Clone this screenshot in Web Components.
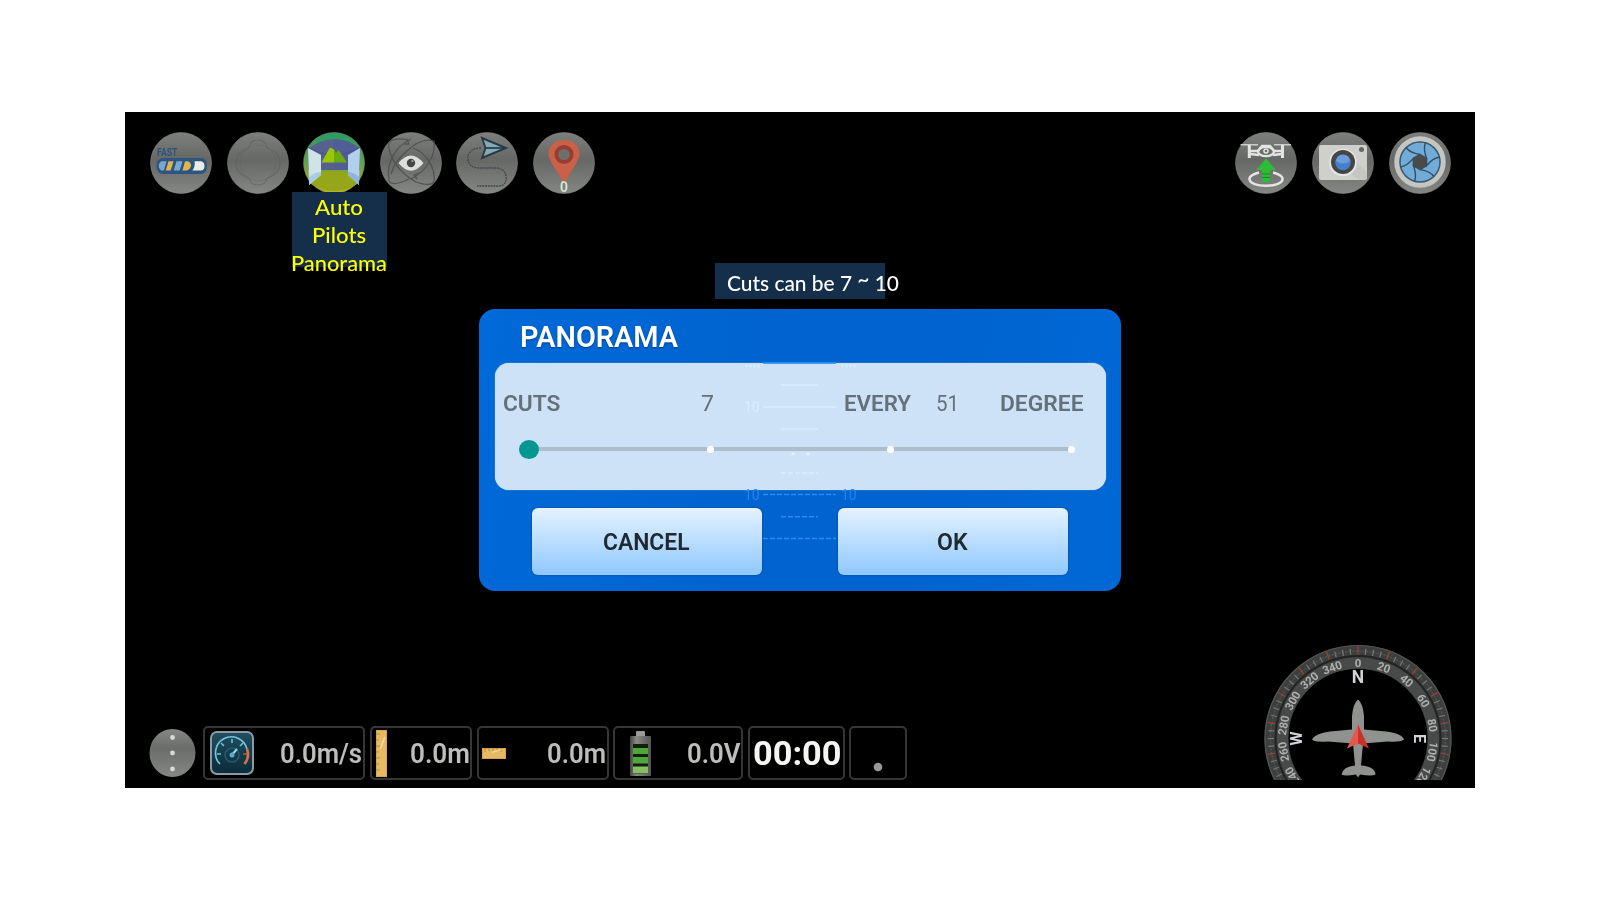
<!DOCTYPE html>
<html lang="en">
<head>
<meta charset="utf-8">
<title>Panorama</title>
<style>
body{margin:0;padding:112px 125px 0;background:#fff;font-family:Roboto,"Liberation Sans",sans-serif}
</style>
</head>
<body>
<flight-screen></flight-screen>
<script>
const define = (name, html, setup) => {
  const t = document.createElement('template');
  t.innerHTML = html;
  customElements.define(name, class extends HTMLElement {
    constructor() {
      super();
      this.attachShadow({mode: 'open'}).append(t.content.cloneNode(true));
    }
    connectedCallback() { if (setup) setup(this, this.shadowRoot); }
  });
};

/* One line of text, stretched or squeezed to an exact width */
define('fit-text', `<style>
:host{display:block;white-space:nowrap;line-height:1;flex:none}
span{display:inline-block;transform-origin:0 50%}
::slotted(sup){font-size:inherit;line-height:0;vertical-align:4px}
</style><span><slot></slot></span>`, (el, r) => {
  const w = +el.getAttribute('w'), s = r.querySelector('span');
  el.style.width = w + 'px';
  el.style.fontSize = el.getAttribute('size') + 'px';
  s.style.transform = 'scaleX(' + w / s.getBoundingClientRect().width + ')';
});

const blades = [0,1,2,3,4,5].map(i => `<path transform="rotate(${i*60} 31 30)" d="M31 22.500L37.500 26Q34 17 36.500 10.500" fill="none" stroke="#344f63" stroke-width="1.400"/>`).join('');
const icons = {
  fast: `<text x="7" y="23.500" font-size="11.500" font-weight="700" fill="#2c527c" textLength="20.500" lengthAdjust="spacingAndGlyphs">FAST</text>
   <rect x="6.500" y="26" width="50.500" height="16" rx="6.500" fill="#2c5580"/>
   <path d="M11 29.200h5.500l-2.600 9.300h-3q-4.500-4.600.1-9.300z" fill="#78a9ca"/><path d="M18.500 29.200h5l-2.800 9.300h-5z" fill="#e2b34e"/><path d="M26.500 29.200h6l-2.800 9.300h-6z" fill="#78a9ca"/><path d="M35 29.200h3q3.500 2 3 4.700t-4 4.600h-4.500z" fill="#e2b34e"/><path d="M44.500 29.200h7q3 1 3 4.700t-3 4.700h-9q3-4.500 2-9.400z" fill="#ecebe6"/>`,
  blank: `<g fill="none" stroke="#5d5f5d" stroke-width="1.100" opacity=".6"><path d="M22 16Q23 8 31 8T40 16M22 46Q23 53 31 53T40 46M22 16Q9 20 9 31T22 46M40 16Q53 20 53 31T40 46"/><circle cx="31" cy="31" r="18" opacity=".5"/></g>`,
  panorama: `<path d="M5 17Q31-3 57 17V38H5z" fill="#56618f"/><path d="M31 7Q47 7 57 17V38H31z" fill="#4e5b98" opacity=".7"/>
   <path d="M5 15Q31 31 57 15" fill="none" stroke="#475083" stroke-width=".8"/>
   <path d="M18.500 30.500L27 15.500 31 17.500V30.500z" fill="#99c800"/><path d="M31 17.500L33 21 35.500 18 44 30.500H31z" fill="#6cab10"/>
   <path d="M8 45Q31 32 54 45V52Q31 66 8 52z" fill="#96a61a"/>
   <path d="M5 16L18 23V43L6 53z" fill="#cfe3e8"/><path d="M57 16L45 23V43L56 53z" fill="#b3cfee"/><path d="M6 45Q12 40 18 40V43L6 53z" fill="#a9cbe4"/><path d="M56 45Q50 40 45 40V43L56 53z" fill="#8fb4dd"/>`,
  eye: `<g fill="none" stroke="#4b4d4b" stroke-width="1.300" opacity=".8"><path d="M31 7C15 15 6 30 9 49Q12 55 29 47"/><path d="M28 8Q16 5 9 10C7 23 18 40 36 50Q50 55 54 50C56 35 45 20 33 16"/><path d="M31 47C48 38 56 22 54 9Q42 5 28 18Q14 30 11 42"/><path d="M24 12L29 12 27 7M39 41L34 43 37 47"/></g>
   <path d="M18.500 31Q31 16 43.500 31Q31 46.500 18.500 31z" fill="#dededc"/><circle cx="31" cy="31" r="4.200" fill="#454845"/><circle cx="32.500" cy="29" r="1.100" fill="#aaa"/>`,
  route: `<path d="M25 16C8 15 8 36 22 36H41C53 37 53 54 43 54H21" fill="none" stroke="#42474f" stroke-width="1.300" stroke-dasharray="2 .8"/><path d="M26 6L50 16 26 26 29.500 16z" fill="#83abb1" stroke="#26394a" stroke-width="1.900"/><path d="M30 16H49" stroke="#26394a" stroke-width="1.700"/>`,
  pin: `<path d="M31 51.500L18 30Q12 19 20 12Q23 8 31 8T42 12Q50 19 44 30z" fill="#cb6049"/><circle cx="31" cy="22.500" r="7.600" fill="#6e706d" stroke="#963f31" stroke-width="4"/><text x="31" y="59.500" text-anchor="middle" font-size="14.500" font-weight="900" fill="#d8e8d0" stroke="#444" stroke-width=".2">0</text>`,
  drone: `<g fill="none" stroke="#e4e4e2"><path d="M5.500 12.700H23M39 12.700H56" stroke-width="1.400" opacity=".8"/><path d="M14.300 13V26M47.500 13V26" stroke-width="3"/><path d="M15 19H23L27 14H35L39 19H47M15 22L24 23M47 22L38 23" stroke-width="2.300"/><ellipse cx="31" cy="19.500" rx="8" ry="4.700" stroke-width="2.300"/><circle cx="31" cy="19" r="2" stroke-width="1.500"/><path d="M24 40.500Q14.500 43 14.500 47C14.500 56 47.500 56 47.500 47Q47.500 43 38 40.500" stroke-width="2.500"/></g><path d="M31 26.500L41 38H35V50H27V38H21z" fill="#2bbd35"/><path d="M27 42H35M27 45.500H35" stroke="#188c25"/>`,
  camera: `<path d="M9 13H53Q55 13 55 15V46Q55 48 53 48H9Q7 48 7 46V15Q7 13 9 13z" fill="#cfd0cc"/><path d="M37 41L48 48H53Q55 48 55 46V40L44 30z" fill="#bfc0bc" opacity=".6"/><circle cx="31" cy="30.500" r="13.800" fill="#e5e5e2"/><circle cx="31" cy="30" r="12" fill="#454746"/><circle cx="31" cy="30.500" r="7.800" fill="#4580cd"/><path d="M24 29Q25 22.500 31 22.500T38 29Q31 34 24 29z" fill="#6c9cdb"/><circle cx="49.500" cy="17.500" r="2.500" fill="#666"/>`,
  shutter: `<circle cx="31" cy="30" r="23" fill="none" stroke="#c5c6c2" stroke-width="5.500"/><circle cx="31" cy="30" r="20" fill="#71acd9" stroke="#3c5a70" stroke-width="1.500"/>${blades}<path d="M31 22.500L37.500 26V34L31 37.500 24.500 34V26z" fill="#494b48"/>`
};

/* Round toolbar button */
define('tool-button', `<style>
:host{display:block;position:relative;width:62px;height:62px;flex:none}
svg{display:block;filter:blur(.6px)}
</style><svg width="62" height="62" viewBox="0 0 62 62" font-family="Roboto"><defs>
<linearGradient id="g" x2="0" y2="1"><stop offset="0" stop-color="#7d7f7d"/><stop offset=".45" stop-color="#666866"/><stop offset="1" stop-color="#858785"/></linearGradient>
<linearGradient id="p" x2="0" y2="1"><stop offset="0" stop-color="#279a62"/><stop offset=".55" stop-color="#69a449"/><stop offset="1" stop-color="#b5b51b"/></linearGradient></defs>
<circle cx="31" cy="31" r="30.500" fill="url(#g)" stroke="#858785" stroke-opacity=".55"/><g></g></svg><slot></slot>`, (el, r) => {
  const k = el.getAttribute('icon');
  if (k === 'panorama') r.querySelector('circle').setAttribute('fill', 'url(#p)');
  r.querySelector('g').innerHTML = icons[k];
});

/* Caption hanging below the active tool */
define('tool-caption', `<style>
:host{position:absolute;left:-11.300px;top:60.500px;width:94.500px;height:75px;background:#152f4b;color:#ff0;font-family:Lato,sans-serif;font-weight:500;display:flex;flex-direction:column;align-items:center;box-sizing:border-box;padding-top:1px}
fit-text{height:28px;line-height:28px}
</style><fit-text w="48" size="22">Auto</fit-text><fit-text w="54" size="22">Pilots</fit-text><fit-text w="96" size="22">Panorama</fit-text>`);

define('tool-bar', `<style>
:host{display:flex;justify-content:space-between;padding:19.500px 24.500px 0 25.300px}
div{display:flex;gap:14.550px}
</style><div><tool-button icon="fast"></tool-button><tool-button icon="blank"></tool-button><tool-button icon="panorama"><tool-caption></tool-caption></tool-button><tool-button icon="eye"></tool-button><tool-button icon="route"></tool-button><tool-button icon="pin"></tool-button></div>
<div><tool-button icon="drone"></tool-button><tool-button icon="camera"></tool-button><tool-button icon="shutter"></tool-button></div>`);

define('hint-label', `<style>
:host{display:flex;align-items:center;box-sizing:border-box;width:170px;height:36px;margin:69.500px 0 0 590px;padding:5px 0 0 12px;background:#152f4b;color:#fff;font-family:Lato,sans-serif;font-weight:500}
</style><fit-text w="172" size="21.500">Cuts can be 7 <sup>~</sup> 10</fit-text>`);

define('push-button', `<style>
:host{display:flex;align-items:center;justify-content:center;box-sizing:border-box;width:230px;height:67px;border-radius:6px;background:linear-gradient(#e5f2ff,#b7dcff 53%,#90c8ff);box-shadow:0 0 2px #093f76;color:#20292f;font-weight:600;padding:2px 1.500px 0 0}
fit-text{filter:blur(.3px)}
</style><slot></slot>`);

define('cut-slider', `<style>
:host{display:flex;align-items:center;justify-content:space-between;height:20px;background:linear-gradient(#adbdcb,#adbdcb) 10px 50%/calc(100% - 12px) 4px no-repeat;filter:blur(.3px)}
b{width:20px;height:19px;border-radius:50%;background:#009891}
i{width:7px;height:7px;border-radius:50%;background:#fff}
i:nth-of-type(1){margin-left:-6px}
</style><b></b><i></i><i></i><i></i>`);

define('cut-panel', `<style>
:host{display:block;box-sizing:border-box;height:127.500px;border-radius:14px;background:#cde2f6;box-shadow:0 0 1px #d5e8df;color:#63717b;padding:29.500px 23px 0 8px}
.row{display:grid;grid-template-columns:198px 143px 92.500px 64px auto;height:24px;align-items:center;filter:blur(.3px)}
.row fit-text{font-weight:600}.row .n{font-weight:400}
cut-slider{margin:23px 7.700px 0 16px}
</style><div class="row"><fit-text w="57.500" size="22">CUTS</fit-text><fit-text class="n" w="13" size="22">7</fit-text><fit-text w="67" size="22">EVERY</fit-text><fit-text class="n" w="23" size="22">51</fit-text><fit-text w="83.500" size="22">DEGREE</fit-text></div><cut-slider></cut-slider>`);

/* Pitch ladder that shows faintly through the dialog */
define('pitch-ladder', `<style>
:host{position:absolute;left:262px;top:45px;width:120px;height:200px;filter:blur(.6px);pointer-events:none}
</style><svg width="120" height="200" font-family="Roboto" font-size="14" fill="none"><g stroke="#dcf0ff" stroke-width="1.500" stroke-opacity=".8"><path d="M22 9.300H95" stroke="#3ca0ff" stroke-opacity="1"/><path d="M40 31H77M22 53H95M40 75H77"/><path d="M40 119H77" stroke-dasharray="5 2"/></g>
<path d="M22 140.500H95M40 162.700H77M22 184.500H95" stroke="#329bff" stroke-opacity=".75" stroke-width="1.500" stroke-dasharray="5 2"/>
<circle cx="52" cy="100" r="1.700" fill="#e2f2ff"/><circle cx="67" cy="100" r="1.700" fill="#e2f2ff"/>
<g fill="#dff1ff" fill-opacity=".75"><text x="3" y="58">10</text></g><path d="M4 12H19M100 12H115" stroke="#dff1ff" stroke-opacity=".5" stroke-width="3" stroke-dasharray="3 1"/>
<g fill="#2187ed"><text x="3" y="146">10</text><text x="100" y="146">10</text></g></svg>`);

define('panorama-dialog', `<style>
:host{display:block;position:relative;box-sizing:border-box;width:642px;height:282px;margin:10.300px 0 0 354.300px;border-radius:16px;background:linear-gradient(100deg,#006ad8,#0063cf 45%,#0063cf 65%,#0068d5);padding:14px 15.500px 0}
.title{color:#fff;font-weight:600;text-shadow:0 1px 2px #003a8a;margin:0 0 10.700px 25px;filter:blur(.3px)}
footer{display:flex;justify-content:space-between;margin:17.700px 37.500px 0 37.500px}
</style><fit-text class="title" w="158" size="29">PANORAMA</fit-text><cut-panel></cut-panel><footer><push-button><fit-text w="86.500" size="23">CANCEL</fit-text></push-button><push-button><fit-text w="30.500" size="23">OK</fit-text></push-button></footer><pitch-ladder></pitch-ladder>`);

/* Heading dial, cut off at the bottom edge of the screen */
define('compass-dial', `<style>
:host{display:block;width:190px;height:136px;filter:blur(.6px)}svg{display:block}
</style><svg width="190" height="136" viewBox="-95 -94.500 190 136" font-family="Roboto"></svg>`, (el, r) => {
  let s = '<circle r="81.500" fill="none" stroke="#3d3f3e" stroke-width="24"/><circle r="75.500" fill="none" stroke="#484a49" stroke-width="11"/><circle r="93" fill="none" stroke="#555" stroke-width="1.200"/><circle r="82.500" fill="none" stroke="#222423" stroke-width="2"/>';
  for (let a = -125; a <= 125; a += 5) {
    const red = a % 20 === 0;
    s += `<path transform="rotate(${a})" d="M0-${red ? 92 : 90}V-84" stroke="${red ? '#a83d36' : '#777a77'}" stroke-width="1.200"/>`;
  }
  s += '<circle r="87.500" fill="none" stroke="#656765" stroke-width=".8" stroke-dasharray="2 1.500"/>';
  for (let a = -120; a <= 120; a += 20)
    s += `<text transform="rotate(${a})" y="-71.500" text-anchor="middle" font-size="11.500" font-weight="700" fill="#aeafad">${(a + 360) % 360}</text>`;
  s += [['N', 0], ['E', 90], ['W', -90]].map(([t, a]) => `<text transform="rotate(${a})" y="${a ? -56 : -55.500}" text-anchor="middle" font-size="${a ? 16 : 17.500}" font-weight="700" fill="#d2d3d7">${t}</text>`).join('');
  s += `<path d="M0-39Q5-35 6-22V-9L28-7Q44-5 46 1Q42 4 30 3L5 5 3 27Q17 28 17.500 36Q14 38 2 36L0 39-2 36Q-14 38-16.500 36Q-15 28-3 27L-5 5-30 3Q-43 4-46 1Q-43-5-28-7L-6-9V-22Q-5-35 0-39z" fill="#90928f"/><path d="M0-14L-11 10 0 5z" fill="#e8574c"/><path d="M0-14L11 10 0 5z" fill="#c93229"/>`;
  r.querySelector('svg').innerHTML = s;
});

const gauge = `<svg width="44" height="44" viewBox="0 0 44 44"><defs><linearGradient id="a" x2="0" y2="1"><stop stop-color="#244e60"/><stop offset=".5" stop-color="#143c4c"/><stop offset="1" stop-color="#0b2c3a"/></linearGradient></defs><rect x="1" y="1" width="42" height="42" rx="6" fill="url(#a)" stroke="#8b9ba3" stroke-width="2"/><g fill="none"><path d="M10 33A16 16 0 1 1 37 18" stroke="#73c5de" stroke-width="1.700"/><path d="M37 18Q40 26 34.500 33" stroke="#dd6e43" stroke-width="2.700"/><path d="M7 23H11M11 12L14 15M22 8V12M33 12L30 15" stroke="#73c5de" stroke-width="1.500"/><path d="M38 23H33" stroke="#dd6e43"/><circle cx="22" cy="24" r="7" stroke="#285d6e" stroke-width="1.500"/><path d="M21 25L27 18" stroke="#92dbed" stroke-width="2"/></g><circle cx="22" cy="24" r="2.500" fill="#5faac0"/></svg>`;
const ruler = (w, h) => `<svg width="${w}" height="${h}"><rect width="${w}" height="${h}" fill="#d9a64d"/><rect x="1" y="1" width="${w-2}" height="${h-2}" fill="#e6b964"/><path d="${h > w ? 'M0 4H4M0 10H3M0 16H4M0 22H3M0 28H4M0 34H3M0 40H4' : 'M3 0V4M7 0V3M11 0V4M15 0V3M19 0V4'}" stroke="#9a682c" stroke-opacity=".6"/><path d="M${w*.4} ${h*.4}L${w*.8} ${h*.15}" stroke="#f3dba6" stroke-width="1.500"/></svg>`;
const battery = `<svg width="21" height="45"><defs><linearGradient id="b"><stop stop-color="#444"/><stop offset=".3" stop-color="#888a84"/><stop offset="1" stop-color="#555"/></linearGradient></defs><rect x="6" width="9" height="6" rx="1" fill="#999"/><rect y="5" width="21" height="40" rx="1" fill="url(#b)"/><rect x="3" y="13" width="15" height="30" fill="#10200c"/><g fill="#50a53a"><rect x="3" y="17" width="15" height="6"/><rect x="3" y="26" width="15" height="6.500"/><rect x="3" y="35.500" width="15" height="7" fill="#85bd68"/></g></svg>`;
const art = {gauge, vertical: ruler(11, 47), horizontal: ruler(24, 11), battery, dot: '<svg width="10" height="10"><circle cx="5" cy="5" r="4.300" fill="#999"/></svg>'};

/* Framed telemetry read-out: picture on the left, value on the right */
define('status-cell', `<style>
:host{display:flex;align-items:center;justify-content:space-between;box-sizing:border-box;height:54px;border:2px solid #353635;border-radius:5px;color:#bdbebc;font-weight:600;flex:none}
svg{display:block;filter:blur(.5px)}
::slotted(fit-text){filter:blur(.4px);margin-top:2px}
</style><span></span><slot></slot>`, (el, r) => {
  r.querySelector('span').innerHTML = art[el.getAttribute('art')] || '';
});

define('status-bar', `<style>
:host{display:flex;align-items:center}
.more{display:block;width:47px;height:48px;margin-right:7px;filter:blur(.6px)}
.t{color:#f5f5f3;font-weight:700;margin-top:0}
</style><svg class="more" viewBox="0 0 47 48"><defs><linearGradient id="m" x2="0" y2="1"><stop stop-color="#858785"/><stop offset=".4" stop-color="#6b6d6b"/><stop offset="1" stop-color="#858785"/></linearGradient></defs><ellipse cx="23.500" cy="24" rx="23" ry="24" fill="url(#m)"/><g fill="#d8d8d6"><circle cx="23.500" cy="8.500" r="2.400"/><circle cx="23.500" cy="24" r="2.400"/><circle cx="23.500" cy="40" r="2.400"/></g></svg>
<status-cell art="gauge" style="width:162px;margin-right:5px;padding:0 1px 0 4.500px"><fit-text w="82" size="27">0.0m/s</fit-text></status-cell>
<status-cell art="vertical" style="width:102px;margin-right:5px;padding:0 0 0 3.500px"><fit-text w="60" size="27">0.0m</fit-text></status-cell>
<status-cell art="horizontal" style="width:131.500px;margin-right:4px;padding:0 1px 0 3px"><fit-text w="59" size="27">0.0m</fit-text></status-cell>
<status-cell art="battery" style="width:130px;margin-right:5px;padding:0 .5px 0 15.500px"><fit-text w="53.500" size="27">0.0V</fit-text></status-cell>
<status-cell style="width:97px;margin-right:4.500px;padding:0 1px 0 0"><fit-text class="t" w="88.500" size="34">00:00</fit-text></status-cell>
<status-cell art="dot" style="width:58px;padding:28px 0 0 21.500px"></status-cell>`);

define('flight-screen', `<style>
:host{display:flex;flex-direction:column;width:1350px;height:676px;background:#000;overflow:hidden}
footer{display:flex;justify-content:space-between;align-items:flex-end;margin-top:auto;padding:0 21.700px 7.600px 24.400px}
</style><tool-bar></tool-bar><hint-label></hint-label><panorama-dialog></panorama-dialog><footer><status-bar></status-bar><compass-dial></compass-dial></footer>`);
</script>
</body>
</html>
